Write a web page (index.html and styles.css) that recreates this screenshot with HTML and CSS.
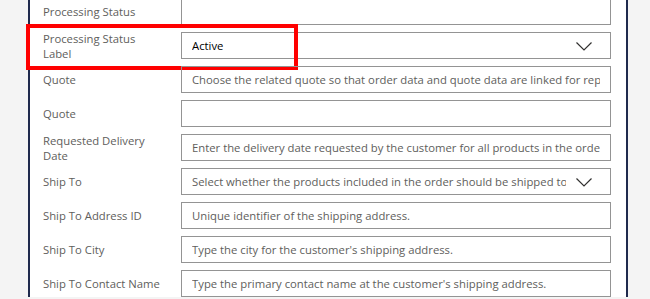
FILE: index.html
```html
<!DOCTYPE html>
<html lang="en">
<head>
  <meta charset="UTF-8">
  <title>Order fields</title>
  <link rel="stylesheet" href="styles.css">
</head>
<body>
<div class="page">
  <div class="panel">
    <div class="form">
      <div class="row">
        <label class="label">Processing Status</label>
        <div class="field"></div>
      </div>
      <div class="row highlighted">
        <label class="label">Processing Status Label</label>
        <div class="field select value">
          <span class="text">Active</span>
          <svg class="chevron" width="16" height="9" viewBox="0 0 16 9"><polyline points="0.5,0.5 8,8 15.5,0.5" fill="none" stroke="#323130" stroke-width="1.2"/></svg>
        </div>
      </div>
      <div class="row">
        <label class="label">Quote</label>
        <div class="field"><span class="text">Choose the related quote so that order data and quote data are linked for reporting and analytics.</span></div>
      </div>
      <div class="row">
        <label class="label">Quote</label>
        <div class="field"></div>
      </div>
      <div class="row">
        <label class="label">Requested Delivery Date</label>
        <div class="field"><span class="text">Enter the delivery date requested by the customer for all products in the order.</span></div>
      </div>
      <div class="row">
        <label class="label">Ship To</label>
        <div class="field select">
          <span class="text">Select whether the products included in the order should be shipped to the specified address or held until the customer calls with further pick up or delivery instructions.</span>
          <svg class="chevron" width="16" height="9" viewBox="0 0 16 9"><polyline points="0.5,0.5 8,8 15.5,0.5" fill="none" stroke="#323130" stroke-width="1.2"/></svg>
        </div>
      </div>
      <div class="row">
        <label class="label">Ship To Address ID</label>
        <div class="field"><span class="text">Unique identifier of the shipping address.</span></div>
      </div>
      <div class="row">
        <label class="label">Ship To City</label>
        <div class="field"><span class="text">Type the city for the customer's shipping address.</span></div>
      </div>
      <div class="row">
        <label class="label">Ship To Contact Name</label>
        <div class="field"><span class="text">Type the primary contact name at the customer's shipping address.</span></div>
      </div>
    </div>
  </div>
</div>
</body>
</html>
```

FILE: styles.css
```css
html,
body {
  margin: 0;
  padding: 0;
  background-color: #f4f4f4;
  font-family: 'Open Sans', 'Noto Sans', sans-serif;
  overflow: hidden;
}
.page {
  height: 299px;
  padding: 0 22px 0 28px;
}
.panel {
  height: 100%;
  background-color: #fff;
  border-left: 2px solid #1f2a4d;
  border-right: 2px solid #1f2a4d;
}
.form {
  margin-top: -2px;
  padding-left: 13px;
}
.row {
  display: flex;
  align-items: center;
  height: 27px;
  margin-bottom: 7px;
  position: relative;
}
.label {
  width: 120px;
  margin-right: 18px;
  flex-shrink: 0;
  font-size: 11.3px;
  line-height: 15px;
  color: #605e5c;
}
.field {
  display: flex;
  align-items: center;
  width: 430px;
  height: 27px;
  box-sizing: border-box;
  border: 1px solid #949494;
  padding: 0 10px;
  font-size: 11.3px;
  color: #605e5c;
}
.text {
  flex: 1;
  min-width: 0;
  white-space: nowrap;
  overflow: hidden;
}
.select {
  padding-right: 18px;
}
.chevron {
  flex-shrink: 0;
  margin-left: 10px;
  margin-top: 2px;
}
.value {
  color: #000;
}
.highlighted::before {
  content: '';
  position: absolute;
  left: -17px;
  top: -8px;
  width: 272px;
  height: 46px;
  box-sizing: border-box;
  border: 4px solid #f00;
}
```
